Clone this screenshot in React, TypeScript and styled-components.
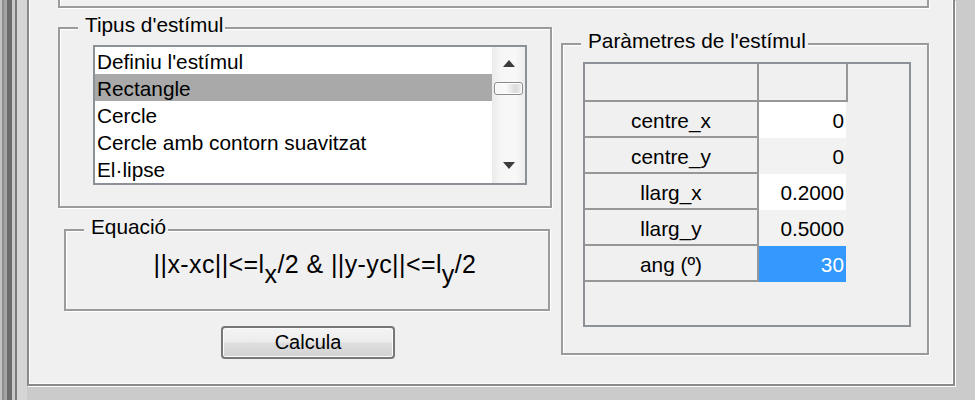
import React from 'react';
import styled, { createGlobalStyle, css } from 'styled-components';

const GlobalStyle = createGlobalStyle`
  html, body { margin: 0; padding: 0; background: #cbcbcb; }
  body { font-family: "Liberation Sans", Arial, sans-serif; color: #000; }
  *, *::before, *::after { box-sizing: border-box; }
`;

const etched = css`
  border: 2px solid #9b9b9b;
  box-shadow: 1px 1px 0 #ffffff, inset 1px 1px 0 #ffffff;
`;

const Window = styled.div`
  display: flex;
  width: 975px;
  height: 400px;
  overflow: hidden;
  background: #cbcbcb;
`;

const FrameEdge = styled.div`
  flex: 0 0 27px;
  height: 100%;
  background: linear-gradient(
    to right,
    #c2c2c2 0px, #c2c2c2 2px,
    #8c8c8c 2px, #8c8c8c 4px,
    #a4a4a4 4px, #a4a4a4 7px,
    #6c6c6c 7px, #6c6c6c 12px,
    #c8c8c8 12px, #c8c8c8 15px,
    #7a7a7a 15px, #7a7a7a 17px,
    #d5d5d5 17px, #d5d5d5 27px
  );
`;

const Panel = styled.div`
  flex: 0 0 928px;
  height: 386px;
  background: #f0f0f0;
  border: 2px solid #8a8a8a;
  border-top: none;
  box-shadow: 1px 1px 0 #fdfdfd, inset 1px 0 0 #fdfdfd, inset -1px -1px 0 #fdfdfd;
`;

const TopStub = styled.div`
  margin-left: 29px;
  width: 871px;
  height: 8px;
  border: 2px solid #9b9b9b;
  border-top: none;
  box-shadow: 1px 1px 0 #ffffff, inset 1px 0 0 #ffffff;
`;

const Columns = styled.div`
  display: flex;
  align-items: flex-start;
  gap: 9px;
  margin-left: 29px;
  margin-top: 6px;
`;

const LeftColumn = styled.div`
  display: flex;
  flex-direction: column;
  align-items: flex-start;
  width: 494px;
`;

const GroupBox = styled.fieldset<{ $w: number; $h?: number; $ml?: number; $mt?: number }>`
  ${etched};
  margin: ${(p) => p.$mt ?? 0}px 0 0 ${(p) => p.$ml ?? 0}px;
  padding: 0;
  min-width: 0;
  width: ${(p) => p.$w}px;
  ${(p) => (p.$h ? `height: ${p.$h}px;` : '')}
`;

const Legend = styled.legend`
  margin-left: 18px;
  padding: 0 2px 6px 7px;
  font-size: 20.8px;
  line-height: 22px;
  background: #f0f0f0;
  white-space: nowrap;
`;

const GroupBody = styled.div<{ $pad: string }>`
  padding: ${(p) => p.$pad};
`;

const ListBox = styled.div`
  display: flex;
  width: 434px;
  height: 140px;
  border: 2px solid #8c9198;
  background: #ffffff;
`;

const Items = styled.div`
  flex: 1;
  display: flex;
  flex-direction: column;
`;

const Item = styled.div<{ $selected?: boolean }>`
  height: 27px;
  padding: 3px 0 0 2px;
  font-size: 20.8px;
  line-height: 24px;
  white-space: nowrap;
  background: ${(p) => (p.$selected ? '#a9a9a9' : 'transparent')};
`;

const ScrollBar = styled.div`
  flex: 0 0 33px;
  display: flex;
  flex-direction: column;
  background: linear-gradient(to right, #eaeaea 0%, #f6f6f6 25%, #f8f8f8 70%, #ededed 100%);
`;

const ScrollButton = styled.div<{ $h: number }>`
  height: ${(p) => p.$h}px;
  display: flex;
  align-items: center;
  justify-content: center;
`;

const Thumb = styled.div`
  margin: 3px 2px 0 2px;
  height: 13px;
  border: 1px solid #8b8b8b;
  border-radius: 3px;
  background: linear-gradient(to right, #f4f4f4 0%, #fafafa 40%, #dcdcdc 75%, #eeeeee 100%);
  box-shadow: inset 0 0 0 1px #ffffff;
`;

const ScrollSpacer = styled.div`
  flex: 1;
`;

const EquationText = styled.div`
  padding: 6px 0 0 16px;
  text-align: center;
  font-size: 25px;
  line-height: 29px;
  letter-spacing: 0.4px;
  white-space: nowrap;
`;

const Sub = styled.sub`
  font-size: 1em;
  line-height: 0;
  vertical-align: -10px;
`;

const PushButton = styled.button`
  margin: 15px 0 0 163px;
  width: 174px;
  height: 33px;
  padding: 0;
  border: 2px solid #777777;
  border-radius: 4px;
  background: linear-gradient(to bottom, #f4f4f4 0%, #ececec 48%, #dedede 52%, #d2d2d2 100%);
  box-shadow: inset 0 0 0 1px #fbfbfb;
  font-family: "Liberation Sans", Arial, sans-serif;
  font-size: 20px;
  color: #000;
`;

const Table = styled.div`
  display: grid;
  grid-template-columns: 174px 89px;
  grid-template-rows: 38px repeat(5, 36px);
  align-content: start;
  justify-content: start;
  width: 328px;
  height: 265px;
  border: 2px solid #8d9299;
`;

const cellLine = css`
  border-right: 2px solid #979797;
  border-bottom: 2px solid #979797;
`;

const HeaderCell = styled.div`
  ${cellLine};
`;

const RowHeader = styled.div`
  ${cellLine};
  padding-top: 7px;
  font-size: 20.8px;
  line-height: 24px;
  text-align: center;
  white-space: nowrap;
`;

const DataCell = styled.div<{ $tone: 'white' | 'grey' | 'selected' }>`
  width: 87px;
  padding: 7px 2px 0 0;
  font-size: 20.8px;
  line-height: 24px;
  text-align: right;
  background: ${(p) => (p.$tone === 'white' ? '#ffffff' : p.$tone === 'grey' ? '#f2f2f2' : '#3399ff')};
  color: ${(p) => (p.$tone === 'selected' ? '#ffffff' : '#000000')};
`;

const UpArrow = () => (
  <svg width="12" height="7" viewBox="0 0 12 7">
    <polygon points="0,7 6,0 12,7" fill="#3c3c3c" />
  </svg>
);

const DownArrow = () => (
  <svg width="12" height="7" viewBox="0 0 12 7">
    <polygon points="0,0 12,0 6,7" fill="#3c3c3c" />
  </svg>
);

const stimuli = [
  'Definiu l\u2019estímul'.replace('\u2019', "'"),
  'Rectangle',
  'Cercle',
  'Cercle amb contorn suavitzat',
  'El·lipse',
];

const params: { name: string; value: string; tone: 'white' | 'grey' | 'selected' }[] = [
  { name: 'centre_x', value: '0', tone: 'white' },
  { name: 'centre_y', value: '0', tone: 'grey' },
  { name: 'llarg_x', value: '0.2000', tone: 'white' },
  { name: 'llarg_y', value: '0.5000', tone: 'grey' },
  { name: 'ang (º)', value: '30', tone: 'selected' },
];

export default function App() {
  return (
    <>
      <GlobalStyle />
      <Window>
        <FrameEdge />
        <Panel>
          <TopStub />
          <Columns>
            <LeftColumn>
              <GroupBox $w={494}>
                <Legend>Tipus d'estímul</Legend>
                <GroupBody $pad="3px 23px 21px 33px">
                  <ListBox>
                    <Items>
                      {stimuli.map((s, i) => (
                        <Item key={s} $selected={i === 1}>
                          {s}
                        </Item>
                      ))}
                    </Items>
                    <ScrollBar>
                      <ScrollButton $h={32}>
                        <UpArrow />
                      </ScrollButton>
                      <Thumb />
                      <ScrollSpacer />
                      <ScrollButton $h={35}>
                        <DownArrow />
                      </ScrollButton>
                    </ScrollBar>
                  </ListBox>
                </GroupBody>
              </GroupBox>
              <GroupBox $w={486} $h={95} $ml={6} $mt={8}>
                <Legend>Equació</Legend>
                <EquationText>
                  ||x-xc||&lt;=l<Sub>x</Sub>/2 &amp; ||y-yc||&lt;=l<Sub>y</Sub>/2
                </EquationText>
              </GroupBox>
              <PushButton type="button">Calcula</PushButton>
            </LeftColumn>
            <GroupBox $w={368} $h={325} $mt={16}>
              <Legend>Paràmetres de l'estímul</Legend>
              <GroupBody $pad="4px 16px 0 20px">
                <Table>
                  <HeaderCell />
                  <HeaderCell />
                  {params.map((p) => (
                    <React.Fragment key={p.name}>
                      <RowHeader>{p.name}</RowHeader>
                      <DataCell $tone={p.tone}>{p.value}</DataCell>
                    </React.Fragment>
                  ))}
                </Table>
              </GroupBody>
            </GroupBox>
          </Columns>
        </Panel>
      </Window>
    </>
  );
}
